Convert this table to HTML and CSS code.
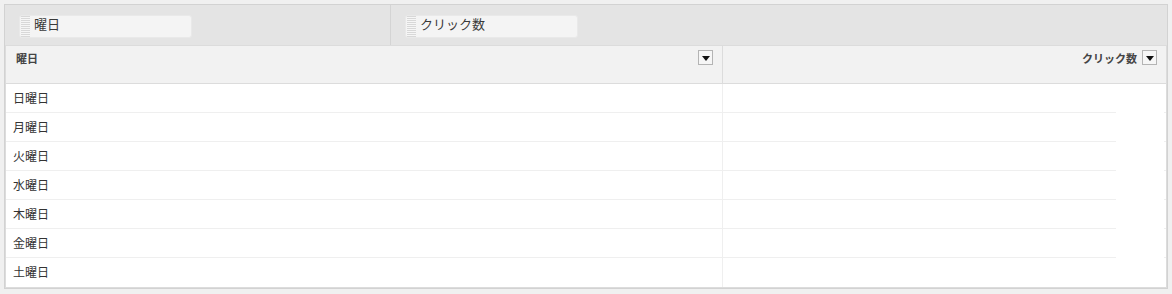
FILE: index.html
```html
<!DOCTYPE html>
<html lang="ja">
<head>
<meta charset="utf-8">
<link rel="stylesheet" href="styles.css">
</head>
<body>
<div class="pivot">
  <div class="dropzone">
    <div class="zone zone-left">
      <div class="pill"><span class="grip"></span><span class="pill-text">曜日</span></div>
    </div>
    <div class="zone zone-right">
      <div class="pill"><span class="grip"></span><span class="pill-text">クリック数</span></div>
    </div>
  </div>
  <div class="grid">
    <div class="head">
      <div class="hcell hcell-left"><span class="htext">曜日</span><span class="ddbtn"></span></div>
      <div class="hcell hcell-right"><span class="htext">クリック数</span><span class="ddbtn"></span></div>
    </div>
    <div class="row"><div class="cell cell-left">日曜日</div><div class="cell cell-right"></div></div>
    <div class="row"><div class="cell cell-left">月曜日</div><div class="cell cell-right"></div></div>
    <div class="row"><div class="cell cell-left">火曜日</div><div class="cell cell-right"></div></div>
    <div class="row"><div class="cell cell-left">水曜日</div><div class="cell cell-right"></div></div>
    <div class="row"><div class="cell cell-left">木曜日</div><div class="cell cell-right"></div></div>
    <div class="row"><div class="cell cell-left">金曜日</div><div class="cell cell-right"></div></div>
    <div class="row last"><div class="cell cell-left">土曜日</div><div class="cell cell-right"></div></div>
  </div>
</div>
</body>
</html>
```
FILE: styles.css
```css
html, body {
  margin: 0;
  padding: 0;
  background: #f0f0f0;
  font-family: "Noto Sans CJK JP", "Noto Sans", sans-serif;
  color: #333;
}
body {
  padding: 4px 0 0 4px;
}
.pivot {
  width: 1164px;
  box-sizing: border-box;
  border: 1px solid #d2d2d2;
  background: #e4e4e4;
}
.dropzone {
  display: flex;
  height: 40px;
}
.zone {
  box-sizing: border-box;
  padding: 10px 0 0 14px;
}
.zone-left {
  width: 386px;
  border-right: 1px solid #d4d4d4;
}
.zone-right {
  flex: 1;
}
.pill {
  display: flex;
  align-items: center;
  box-sizing: border-box;
  width: 173px;
  height: 23px;
  background: #f4f4f4;
  border: 1px solid #e9e9e9;
  border-radius: 3px;
  padding-left: 1px;
}
.grip {
  width: 9px;
  height: 21px;
  background: repeating-linear-gradient(to bottom, #d8d8d8 0, #d8d8d8 1px, #f6f6f6 1px, #f6f6f6 2px);
  margin-right: 4px;
}
.pill-text {
  font-size: 13px;
  line-height: 21px;
  color: #3a3a3a;
  position: relative;
  top: -3px;
}
.grid {
  border: 1px solid #dcdcdc;
  background: #fff;
}
.head {
  display: flex;
  height: 37px;
  background: #f2f2f2;
  border-bottom: 1px solid #dcdcdc;
}
.hcell {
  display: flex;
  align-items: center;
  box-sizing: border-box;
  font-size: 11px;
  font-weight: bold;
  color: #444;
}
.hcell-left {
  width: 717px;
  border-right: 1px solid #dcdcdc;
  padding: 0 9px 0 10px;
  justify-content: space-between;
}
.hcell-left .htext {
  position: relative;
  top: -7px;
}
.hcell-right {
  flex: 1;
  justify-content: flex-end;
  padding-right: 9px;
}
.hcell-right .htext {
  margin-right: 5px;
  position: relative;
  top: -7px;
}
.ddbtn {
  display: flex;
  align-items: center;
  justify-content: center;
  box-sizing: border-box;
  width: 15px;
  height: 15px;
  border: 1px solid #b4b4b4;
  background: #f6f6f6;
  position: relative;
  top: -7px;
}
.ddbtn::after {
  content: "";
  width: 0;
  height: 0;
  border-left: 4px solid transparent;
  border-right: 4px solid transparent;
  border-top: 5px solid #111;
  margin-top: 1px;
}
.row {
  display: flex;
  height: 29px;
}
.cell {
  box-sizing: border-box;
  height: 29px;
}
.cell-left {
  width: 717px;
  border-right: 1px solid #efefef;
  border-bottom: 1px solid #efefef;
  padding-left: 7px;
  font-size: 12px;
  line-height: 28px;
  color: #333;
}
.cell-right {
  flex: 1;
  background:
    linear-gradient(#efefef, #efefef) left bottom / 393px 1px no-repeat,
    linear-gradient(#efefef, #efefef) right bottom / 2px 1px no-repeat;
}
.row.last .cell-left {
  border-bottom: none;
}
.row.last .cell-right {
  background: none;
}
```
